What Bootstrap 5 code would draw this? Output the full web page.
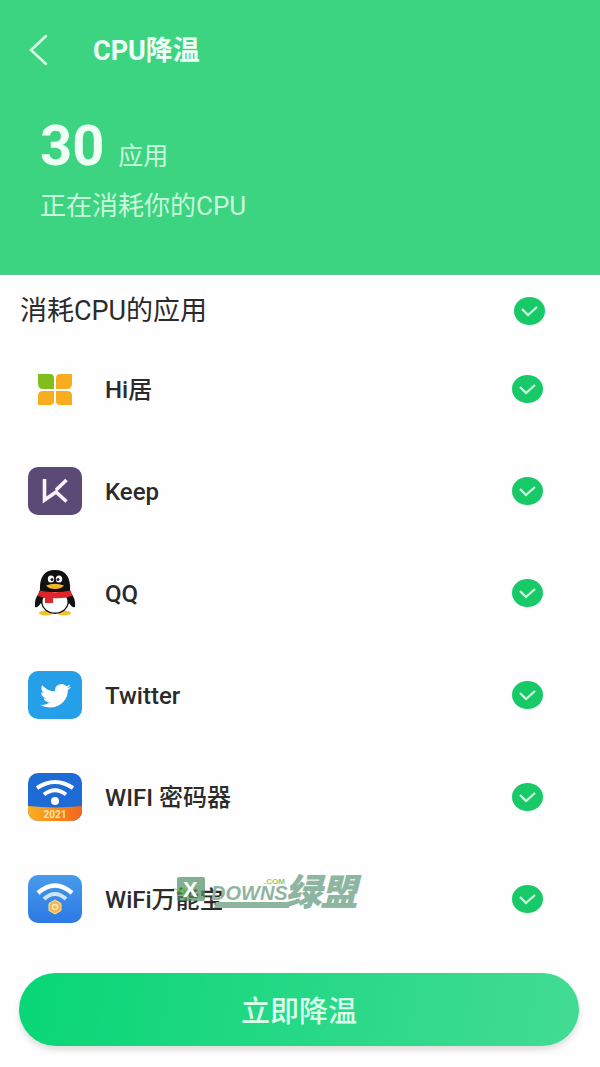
<!DOCTYPE html>
<html lang="zh-CN">
<head>
<meta charset="utf-8">
<meta name="viewport" content="width=device-width, initial-scale=1">
<title>CPU降温</title>
<link href="https://cdn.jsdelivr.net/npm/bootstrap@5.3.0/dist/css/bootstrap.min.css" rel="stylesheet">
<style>
  body { font-family: Roboto, "Noto Sans CJK SC", sans-serif; background: #fefefe; color: #2b2b2b; }
  .hero { background: #3dd481; color: #f0fff6; height: 275px; padding: 31px 40px 0 20px; border-bottom: 1px solid #5fc78f; }
  .back-btn { width: 36px; height: 36px; color: #dcffe9; }
  .hero-title { font-size: 27px; line-height: 36px; margin-left: 37px; padding-top: 2px; }
  .stats { padding: 45px 0 0 20px; }
  .count { font-size: 56px; line-height: 64px; }
  .unit { font-size: 25px; line-height: 32px; margin-left: 14px; color: #c9f8dc; }
  .note { font-size: 26px; line-height: 40px; margin-top: 8px; color: #c9f8dc; }
  .list-title { font-size: 27px; line-height: 36px; }
  .list-head { padding: 8px 55px 0 20px; height: 63px; }
  .app-row { height: 102px; padding: 0 57px 0 27px; }
  .app-icon { width: 56px; height: 50px; flex: none; }
  .app-name { font-size: 24px; line-height: 32px; margin-left: 22px; padding-top: 2px; font-weight: 500; }
  .round-check.form-check-input { width: 31px; height: 28px; margin: 0; border: 0; border-radius: 50%; flex: none; box-shadow: none; }
  .round-check.form-check-input:checked {
    background-color: #18c968; background-size: 100% 100%;
    background-image: url("data:image/svg+xml,%3Csvg xmlns='http://www.w3.org/2000/svg' viewBox='0 0 31 28' preserveAspectRatio='none'%3E%3Cpath d='M8 12l6 6 9-8' fill='none' stroke='%23cffbe0' stroke-width='2.200'/%3E%3C/svg%3E"); }
  .action { padding: 23px 21px 21px 19px; }
  .cool-btn, .cool-btn:hover { height: 73px; padding: 10px 0 4px; font-size: 29px; color: #dcffeb; border: 0; background: linear-gradient(100deg, #08d676, #43db94); box-shadow: 0 4px 6px #0002; }
  .mark-brand { left: 172px; top: 8px; width: 204px; height: 66px; pointer-events: none; }
  .mark-brand text { font-family: "Liberation Sans", "Noto Sans CJK SC", sans-serif; font-weight: 700; }
</style>
</head>
<body>
<header class="hero">
  <div class="d-flex align-items-center">
    <button type="button" class="back-btn btn p-0 border-0" aria-label="返回">
      <svg class="d-block" width="36" height="36" viewBox="0 0 36 36" fill="none" stroke="currentColor" stroke-width="2.500" stroke-linecap="round"><path d="M26 4L11 18L26 32"/></svg>
    </button>
    <h1 class="hero-title mb-0 fw-bold">CPU降温</h1>
  </div>
  <div class="stats">
    <div class="d-flex align-items-baseline"><strong class="count">30</strong><span class="unit">应用</span></div>
    <p class="note mb-0">正在消耗你的CPU</p>
  </div>
</header>
<main>
  <div class="list-head d-flex align-items-center justify-content-between">
    <label class="list-title" for="all">消耗CPU的应用</label>
    <input class="form-check-input round-check" type="checkbox" id="all" checked>
  </div>
  <ul class="list-unstyled mb-0">
    <li class="app-row d-flex align-items-center">
      <svg class="app-icon" viewBox="0 0 56 50">
        <path d="M11 10h12q4 0 4 4v11H16q-5 0-5-6z" fill="#82bd1f"/>
        <path d="M45 10H33q-4 0-4 4v11h11q5 0 5-6z" fill="#f8ad20"/>
        <path d="M11 41h12q4 0 4-4V27H16q-5 0-5 5z" fill="#f8ad20"/>
        <path d="M45 41H33q-4 0-4-4V27h11q5 0 5 5z" fill="#f8ad20"/>
      </svg>
      <label class="app-name flex-grow-1" for="a1">Hi居</label>
      <input class="form-check-input round-check" type="checkbox" id="a1" checked>
    </li>
    <li class="app-row d-flex align-items-center">
      <svg class="app-icon" viewBox="0 0 56 50">
        <rect x="1" y="1" width="54" height="48" rx="10" fill="#5b4a75"/>
        <path d="M17.500 13V34L29 26L39.500 35.500M39.500 14L29 24" fill="none" stroke="#fdf3ff" stroke-width="3.600"/>
      </svg>
      <label class="app-name flex-grow-1" for="a2">Keep</label>
      <input class="form-check-input round-check" type="checkbox" id="a2" checked>
    </li>
    <li class="app-row d-flex align-items-center">
      <svg class="app-icon" viewBox="0 0 56 50">
        <ellipse cx="19" cy="45" rx="7" ry="2.500" fill="#efc42e"/>
        <ellipse cx="37" cy="45" rx="7" ry="2.500" fill="#efc42e"/>
        <path d="M13 24Q7 30 8 39Q11 40 14 35Q16 45 28 46Q40 45 42 35Q45 40 48 39Q49 30 43 24Z" fill="#111"/>
        <ellipse cx="28" cy="34" rx="12.500" ry="10.500" fill="#fff"/>
        <path d="M13 24C12 9 17 2 28 2S44 9 43 24Z" fill="#111"/>
        <ellipse cx="24" cy="11" rx="3.200" ry="3.600" fill="#fff"/><ellipse cx="32" cy="11" rx="3.200" ry="3.600" fill="#fff"/>
        <circle cx="25" cy="11.500" r="1.500" fill="#222"/><circle cx="31" cy="11.500" r="1.500" fill="#222"/>
        <path d="M19 17.500Q28 14 37 17.500Q34 21 28 21T19 17.500" fill="#f5b52a"/>
        <path d="M12 22.500Q28 26 44 22.500L45 28Q35 31 26 30V35H18V30L11 28Z" fill="#df2529"/>
      </svg>
      <label class="app-name flex-grow-1" for="a3">QQ</label>
      <input class="form-check-input round-check" type="checkbox" id="a3" checked>
    </li>
    <li class="app-row d-flex align-items-center">
      <svg class="app-icon" viewBox="0 0 56 50">
        <rect x="1" y="1" width="54" height="48" rx="10" fill="#249fe8"/>
        <path transform="translate(13 10.500) scale(1.940 1.800)" fill="#fff" d="M5.026 15c6.038 0 9.341-5.003 9.341-9.334 0-.14 0-.282-.006-.422A6.685 6.685 0 0 0 16 3.542a6.658 6.658 0 0 1-1.889.518 3.301 3.301 0 0 0 1.447-1.817 6.533 6.533 0 0 1-2.087.793A3.286 3.286 0 0 0 7.875 6.030a9.325 9.325 0 0 1-6.767-3.429 3.289 3.289 0 0 0 1.018 4.382A3.323 3.323 0 0 1 .640 6.575v.045a3.288 3.288 0 0 0 2.632 3.218 3.203 3.203 0 0 1-.865.115 3.230 3.230 0 0 1-.614-.057 3.283 3.283 0 0 0 3.067 2.277A6.588 6.588 0 0 1 .780 13.580a6.320 6.320 0 0 1-.780-.045A9.344 9.344 0 0 0 5.026 15z"/>
      </svg>
      <label class="app-name flex-grow-1" for="a4">Twitter</label>
      <input class="form-check-input round-check" type="checkbox" id="a4" checked>
    </li>
    <li class="app-row d-flex align-items-center">
      <svg class="app-icon" viewBox="0 0 56 50">
        <defs>
          <linearGradient id="org"><stop stop-color="#fbb222"/><stop offset="1" stop-color="#f3641c"/></linearGradient>
          <clipPath id="tile"><rect x="1" y="1" width="54" height="48" rx="10"/></clipPath>
        </defs>
        <g clip-path="url(#tile)">
          <rect width="56" height="50" fill="#1e6bd6"/>
          <path d="M0 34Q28 37 56 34V50H0Z" fill="url(#org)"/>
        </g>
        <path d="M10 16Q28 4 46 16M17 22.500Q28 14 39 22.500" fill="none" stroke="#fff" stroke-width="4"/>
        <circle cx="28" cy="29" r="4" fill="#fff"/>
        <text x="28" y="45.500" text-anchor="middle" font-size="10" font-weight="700" fill="#ffe5a8">2021</text>
      </svg>
      <label class="app-name flex-grow-1" for="a5">WIFI 密码器</label>
      <input class="form-check-input round-check" type="checkbox" id="a5" checked>
    </li>
    <li class="app-row d-flex align-items-center position-relative">
      <svg class="app-icon" viewBox="0 0 56 50">
        <defs><linearGradient id="blu" x2="0" y2="1"><stop stop-color="#489bea"/><stop offset="1" stop-color="#2c79e4"/></linearGradient></defs>
        <rect x="1" y="1" width="54" height="48" rx="10" fill="url(#blu)"/>
        <path d="M11 19Q28 4 45 19" fill="none" stroke="#fff" stroke-width="4.500"/>
        <path d="M17 25Q28 15 39 25" fill="none" stroke="#cfe4ff" stroke-width="4"/>
        <path d="M28 26L34 29.500V36.500L28 40L22 36.500V29.500Z" fill="#f5b54a" stroke="#ffe4a4"/>
        <circle cx="28" cy="33" r="2.500" fill="none" stroke="#ffe9b8" stroke-width="1.500"/>
      </svg>
      <label class="app-name flex-grow-1" for="a6">WiFi万能宝</label>
      <input class="form-check-input round-check" type="checkbox" id="a6" checked>
      <svg class="mark-brand position-absolute" viewBox="0 -10 204 66">
        <rect x="5" y="11" width="28" height="24" rx="2" fill="#4d8b63" opacity=".7"/>
        <path d="M0 22L12 24L8 17L18 26L12 35L10 27Z" fill="#75bd4c" opacity=".7"/>
        <path d="M44 36H117V42H42Z" fill="#8db5a0"/>
        <text x="11" y="31" font-size="22" fill="#fff">X</text>
        <g fill="#8db5a0" font-style="italic">
          <text x="39" y="34" font-size="20">DOWNS</text>
          <text x="113" y="39" font-size="36" stroke="#8db5a0">绿盟</text>
        </g>
        <text x="92" y="18" font-size="8" fill="#8ecb6c">.COM</text>
      </svg>
    </li>
  </ul>
  <div class="action">
    <button type="button" class="btn cool-btn w-100 rounded-pill fw-medium">立即降温</button>
  </div>
</main>
<script src="https://cdn.jsdelivr.net/npm/bootstrap@5.3.0/dist/js/bootstrap.bundle.min.js"></script>
</body>
</html>
